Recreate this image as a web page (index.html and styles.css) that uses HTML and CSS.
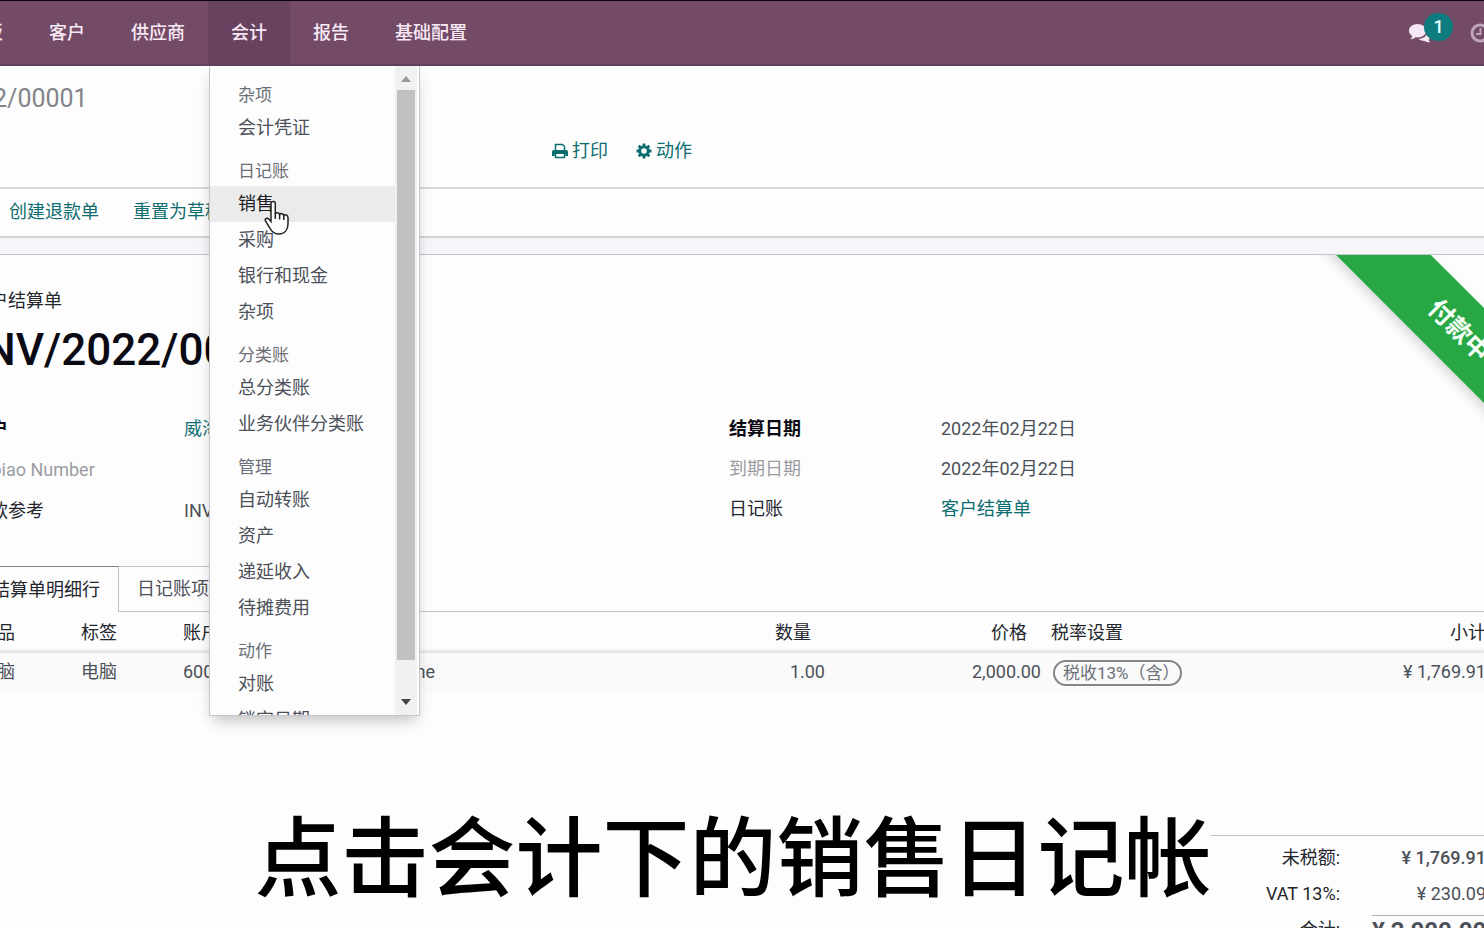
FILE: index.html
```html
<!DOCTYPE html>
<html lang="zh-CN">
<head>
<meta charset="utf-8">
<title>客户结算单</title>
<link rel="stylesheet" href="styles.css">
</head>
<body>
<div class="app">
  <nav class="navbar">
    <div class="nav-item"><button class="nav-button">仪表板</button></div>
    <div class="nav-item"><button class="nav-button">客户</button></div>
    <div class="nav-item"><button class="nav-button">供应商</button></div>
    <div class="nav-item open">
      <button class="nav-button">会计</button>
      <div class="menu">
        <div class="menu-list">
          <div class="menu-heading">杂项</div>
          <a class="menu-link" href="#">会计凭证</a>
          <div class="menu-heading">日记账</div>
          <a class="menu-link active" href="#">销售
            <svg class="cursor" viewBox="0 0 26 36" width="26" height="36"><path d="M7 3.5C7 .8 11.3.8 11.3 3.5V14c.5-1.800 4-1.800 4.300.6.8-1.600 4-1.300 4.200 1 1-1.400 4.200-.8 4.200 1.900V24c0 6-3.500 10-9.500 10-5 0-7-2.500-9-6.500L1.500 21c-1-2.500 1.800-3.700 3.500-1.800L7 21.500Z" fill="#fdfdfd" stroke="#222" stroke-width="1.500"/><path d="M11.300 13v6M15.600 14v5.500M19.800 15.500V20" stroke="#222" stroke-width="1.500"/></svg>
          </a>
          <a class="menu-link" href="#">采购</a>
          <a class="menu-link" href="#">银行和现金</a>
          <a class="menu-link" href="#">杂项</a>
          <div class="menu-heading">分类账</div>
          <a class="menu-link" href="#">总分类账</a>
          <a class="menu-link" href="#">业务伙伴分类账</a>
          <div class="menu-heading">管理</div>
          <a class="menu-link" href="#">自动转账</a>
          <a class="menu-link" href="#">资产</a>
          <a class="menu-link" href="#">递延收入</a>
          <a class="menu-link" href="#">待摊费用</a>
          <div class="menu-heading">动作</div>
          <a class="menu-link" href="#">对账</a>
          <a class="menu-link" href="#">锁定日期</a>
        </div>
        <div class="scrollbar">
          <svg viewBox="0 0 10 6" width="10" height="6"><path d="M0 6 5 0l5 6Z" fill="#999"/></svg>
          <div class="thumb"></div>
          <svg class="down" viewBox="0 0 10 6" width="10" height="6"><path d="M0 0h10L5 6Z" fill="#444"/></svg>
        </div>
      </div>
    </div>
    <div class="nav-item"><button class="nav-button">报告</button></div>
    <div class="nav-item"><button class="nav-button">基础配置</button></div>
    <div class="systray">
      <button class="tray-button" aria-label="消息">
        <svg viewBox="0 0 24 20" width="24" height="20" fill="#f3e8f3"><path d="M9.500 1C4.500 1 1 4 1 7.700c0 2.300 1.300 4.200 3.300 5.400-.3 1.300-1 2.300-1.800 3.100 2 0 3.700-.7 5-1.900l2 .1c5 0 8.700-3 8.700-6.700S14.500 1 9.500 1Z"/><path d="M19.500 8.500c0 4-4 7.200-9 7.500 1.500 1.200 3.700 1.900 6 1.900 1.700 1 3.500 1.500 5.700 1.400-.8-.7-1.300-1.500-1.600-2.500 3.300-2.300 3-6.300-1.100-8.300Z"/></svg>
        <span class="badge">1</span>
      </button>
      <button class="tray-button" aria-label="活动">
        <svg viewBox="0 0 20 20" width="20" height="20" fill="none" stroke="#bda5b7" stroke-width="3"><circle cx="10" cy="10" r="8"/><path d="M10.500 5v6H6" stroke-width="2"/></svg>
      </button>
    </div>
  </nav>

  <header class="control-panel">
    <div class="breadcrumb">INV/2022/00001</div>
    <div class="actions">
      <button class="link-button"><svg viewBox="0 0 16 16" width="16" height="16"><path d="M3.500 8V1.500h7l2 2V8" fill="none" stroke="#0c6d70" stroke-width="1.500"/><path d="M0 9c0-1.200.8-2 2-2h12c1.200 0 2 .8 2 2v4h-2.700v-2H2.700v2H0Z" fill="#0c6d70"/><path d="M3.500 11v3.500h9V11" fill="none" stroke="#0c6d70" stroke-width="1.500"/></svg>打印</button>
      <button class="link-button"><svg viewBox="0 0 16 16" width="16" height="16" fill="none" stroke="#0c6d70"><circle cx="8" cy="8" r="4.300" stroke-width="3"/><path d="M8 .5v3M8 12.500v3M.5 8h3M12.500 8h3M2.700 2.700l2 2M11.300 11.300l2 2M13.300 2.700l-2 2M4.700 11.300l-2 2" stroke-width="2.800"/></svg>动作</button>
    </div>
  </header>

  <div class="statusbar">
    <button class="link-button">创建退款单</button>
    <button class="link-button">重置为草稿</button>
  </div>

  <div class="content">
    <main class="sheet">
      <div class="ribbon">付款中</div>
      <div class="doc-type">客户结算单</div>
      <h1 class="doc-name">INV/2022/00001</h1>
      <div class="fields">
        <dl class="group left">
          <dt class="required">客户</dt><dd><a href="#">威海电脑公司</a></dd>
          <dt class="muted">Fapiao Number</dt><dd></dd>
          <dt>付款参考</dt><dd>INV/2022/00001</dd>
        </dl>
        <dl class="group">
          <dt class="required">结算日期</dt><dd>2022年02月22日</dd>
          <dt class="muted">到期日期</dt><dd>2022年02月22日</dd>
          <dt>日记账</dt><dd><a href="#">客户结算单</a></dd>
        </dl>
      </div>
      <div class="tabs">
        <button class="tab selected">结算单明细行</button>
        <button class="tab">日记账项目</button>
      </div>
      <table class="lines">
        <colgroup><col class="c-short"><col class="c-short"><col><col class="c-qty"><col class="c-price"><col class="c-tax"><col class="c-sub"></colgroup>
        <thead><tr><th>产品</th><th>标签</th><th>账户</th><th class="num">数量</th><th class="num">价格</th><th class="tax">税率设置</th><th class="sum">小计</th></tr></thead>
        <tbody><tr><td>电脑</td><td>电脑</td><td>6001010: 主营业务收入 Income</td><td class="num">1.00</td><td class="num">2,000.00</td><td class="tax"><span class="tag">税收13%（含）</span></td><td class="sum">¥ 1,769.91</td></tr></tbody>
      </table>
      <dl class="totals">
        <dt>未税额:</dt><dd class="strong">¥ 1,769.91</dd>
        <dt>VAT 13%:</dt><dd>¥ 230.09</dd>
        <dt>合计:</dt><dd class="grand">¥ 2,000.00</dd>
      </dl>
    </main>
  </div>
</div>
<div class="caption">点击会计下的销售日记帐</div>
</body>
</html>
```
FILE: styles.css
```css
* { box-sizing: border-box; }
body {
  margin: 0;
  height: 100vh;
  overflow: hidden;
  position: relative;
  background: #fdfdfd;
  color: #4c5058;
  font: 18px/36px Roboto, "Noto Sans CJK SC", sans-serif;
}
button { font: inherit; color: inherit; background: none; border: 0; padding: 0; white-space: nowrap; }
a { color: #0c6d70; text-decoration: none; }
dl, dd, h1 { margin: 0; }

.app { margin: 0 -20px 0 -120px; }

.navbar {
  display: flex;
  height: 66px;
  padding-left: 46px;
  background: #734b67;
  border-top: 1px solid #0c060a;
  border-bottom: 2px solid #60405a;
  color: #f8e9f5;
}
.nav-item { position: relative; display: flex; }
.nav-button { padding: 0 23px; font-weight: 500; }
.open { background: #68435f; }
.systray { display: flex; gap: 38px; margin-left: auto; padding-right: 14px; }
.tray-button { position: relative; display: flex; align-items: center; }
.badge {
  position: absolute;
  left: 16px;
  top: 12px;
  width: 29px;
  height: 28px;
  border-radius: 14px;
  background: #0e7c7e;
  color: #e8ffff;
  font-weight: 500;
  line-height: 28px;
}

.menu {
  position: absolute;
  z-index: 2;
  top: 65px;
  left: 1px;
  width: 211px;
  height: 70vh;
  display: flex;
  overflow: hidden;
  background: #fdfdfd;
  border: 1px solid #c4c4cc;
  border-top: 0;
  box-shadow: 0 8px 14px -4px rgba(0, 0, 0, .25);
}
.menu-list { flex: 1; padding-top: 4px; }
.menu-heading { margin-top: 11px; padding: 0 0 1px 28px; font-size: 17px; line-height: 28px; color: #6c7078; }
.menu-link { display: block; position: relative; padding-left: 28px; color: #4c5058; }
.active { background: #ebebeb; color: #1c1c24; }
.cursor { position: absolute; z-index: 1; left: 54px; top: 14px; }
.scrollbar {
  width: 24px;
  display: flex;
  flex-direction: column;
  align-items: center;
  gap: 8px;
  padding: 10px 2px;
  background: #f1f1f1;
  border-right: 2px solid #fdfdfd;
}
.thumb { width: 18px; height: 570px; background: #c1c1c1; }
.down { margin-top: auto; }

.control-panel { display: grid; padding: 15px 0 18px; border-bottom: 2px solid #d8d8da; }
.breadcrumb { padding-left: 20px; font-size: 25px; color: #82848a; }
.actions { display: flex; gap: 28px; margin-top: 16px; padding-left: 672px; }
.link-button { display: flex; align-items: center; gap: 4px; color: #0c6d70; }
.statusbar { display: flex; gap: 34px; padding: 5px 0 6px 129px; border-bottom: 2px solid #d2d3d7; }

.content { padding-top: 16px; background: #f4f6fa; }
.sheet {
  position: relative;
  overflow: hidden;
  padding: 28px 18px 0 92px;
  background: #fdfdfd;
  border-top: 1px solid #c4c4cc;
}
.ribbon {
  position: absolute;
  top: 42px;
  right: -115px;
  width: 320px;
  transform: rotate(45deg);
  background: #28a745;
  color: #f4fff6;
  box-shadow: 0 5px 12px rgba(0, 0, 0, .15);
  font-size: 25px;
  font-weight: 700;
  line-height: 67px;
  text-align: center;
}
.doc-type { color: #24262e; }
.doc-name { font-size: 44px; font-weight: 500; line-height: 62px; color: #0a0a14; }
.fields { display: grid; grid-template-columns: 1fr 1fr; margin-top: 28px; }
.group { display: grid; grid-template-columns: 212px 1fr; grid-auto-rows: 40px; line-height: 40px; }
.left { grid-auto-rows: 41px; }
.group dt { color: #24262e; }
.group .required { font-weight: 700; color: #0a0a14; }
.group .muted { color: #9a9ca2; }

.tabs { display: flex; margin: 34px -18px 0 -92px; padding-left: 94px; border-bottom: 1px solid #c4c4c8; }
.tab { padding: 4px 18px; border: 1px solid #c4c4c8; border-left: 0; border-bottom: 0; }
.selected { border-top-color: #808088; color: #24262e; margin-bottom: -1px; background: #fdfdfd; }

.lines { width: 100%; table-layout: fixed; border-collapse: collapse; }
.c-short { width: 102px; }
.c-qty { width: 200px; }
.c-price { width: 216px; }
.c-tax { width: 280px; }
.c-sub { width: 158px; }
.lines th, .lines td { padding: 0 7px; text-align: left; white-space: nowrap; }
.lines th { height: 41px; font-weight: 400; color: #24262e; }
.lines td { height: 38px; }
.lines tbody { background: #fafafa; box-shadow: 0 -2px 4px rgba(0, 0, 0, .14); }
.lines .num { text-align: right; }
.lines th.num { padding-right: 21px; }
.lines th.tax { padding-left: 3px; }
.lines td.tax { padding-left: 5px; }
.lines .sum { padding-right: 0; text-align: right; }
.tag { display: inline-block; padding: 0 0 0 8px; border: 2px solid #85858a; border-radius: 13px; font-size: 17px; line-height: 22px; color: #6c7078; vertical-align: middle; }

.totals {
  display: grid;
  grid-template-columns: 130px 146px;
  grid-auto-rows: 36px;
  justify-content: end;
  margin-top: 144px;
  padding-top: 4px;
  border-top: 1px solid #c4c4c8;
  margin-left: auto;
  width: 276px;
  text-align: right;
}
.totals dt { color: #24262e; }
.totals .strong { font-weight: 500; }
.totals .grand { margin-left: 32px; margin-top: 3px; border-top: 1px solid #b0b0b6; font-size: 24px; line-height: 30px; font-weight: 700; white-space: nowrap; }

.caption {
  position: absolute;
  z-index: 3;
  bottom: 26px;
  left: 0;
  right: 18px;
  text-align: center;
  font: 500 87px/100px "Noto Sans CJK SC", sans-serif;
  color: #000;
}
```
